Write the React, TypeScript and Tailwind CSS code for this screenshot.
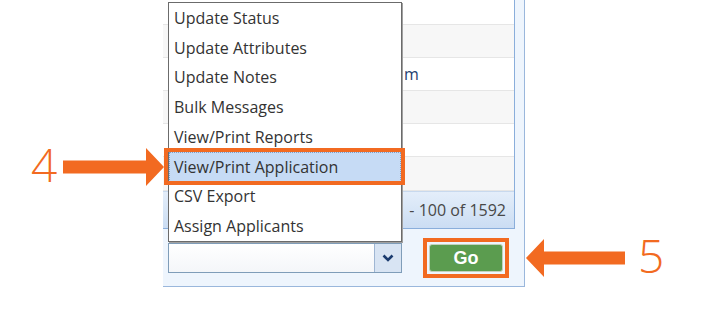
import React from "react";

const actions = [
  "Update Status",
  "Update Attributes",
  "Update Notes",
  "Bulk Messages",
  "View/Print Reports",
  "View/Print Application",
  "CSV Export",
  "Assign Applicants",
];

// only the tail of one cell peeks out from under the open menu
const rows = [
  { h: "h-[25px]", bg: "bg-white", text: "" },
  { h: "h-[33px]", bg: "bg-[#f7f7f7]", text: "" },
  { h: "h-[33px]", bg: "bg-white", text: "m" },
  { h: "h-[33px]", bg: "bg-[#f7f7f7]", text: "" },
  { h: "h-[33px]", bg: "bg-white", text: "" },
  { h: "h-[34px]", bg: "bg-[#f7f7f7]", text: "" },
];

function Chevron() {
  return (
    <svg width="12" height="8" viewBox="0 0 12 8">
      <path d="M1.5 1.5 L6 6 L10.5 1.5" fill="none" stroke="#1b3c6f" strokeWidth="2.6" />
    </svg>
  );
}

export default function App() {
  return (
    <div className="relative w-[720px] h-[318px] bg-white overflow-hidden font-['Open_Sans',sans-serif]">
      {/* grid panel */}
      <div className="ml-[163px] w-[362px] h-[287px] flex flex-col bg-[#eef5fd] border-r border-b border-[#9ab7dc]">
        <div className="w-[352px] h-[229px] shrink-0 flex flex-col bg-white border-r border-b border-[#8aaedb]">
          {rows.map((r, i) => (
            <div
              key={i}
              className={`${r.h} ${r.bg} shrink-0 flex items-center pl-[241px] border-b border-[#e6e6e6] text-[16px] text-[#24406e]`}
            >
              {r.text}
            </div>
          ))}
          <div className="flex-1 flex items-center justify-end pr-[8px] bg-gradient-to-b from-[#e4eefa] to-[#cbddf3] border-t border-[#c8d9ee] text-[16px] font-medium text-[#484848]">
            - 100 of 1592
          </div>
        </div>

        <div className="flex items-center pl-[5px] mt-[9px]">
          <div className="w-[234px] h-[30px] flex border border-[#7f9db9] bg-white">
            <div className="flex-1 bg-gradient-to-b from-white to-[#f4f6f9]" />
            <div className="w-[27px] flex items-center justify-center bg-[#d8e4f3] border-l border-[#9fb6d3]">
              <Chevron />
            </div>
          </div>
          <div className="ml-[21px] w-[86px] h-[40px] p-[2px] border-4 border-[#f26a21] bg-[#eef5fd]">
            <button className="w-full h-full flex items-center justify-center rounded-[3px] border border-[#c3d2bd] bg-[#5b9c4f] text-white text-[18px] font-bold font-['Liberation_Sans',sans-serif]">
              Go
            </button>
          </div>
        </div>
      </div>

      {/* open action menu */}
      <div className="absolute left-[168px] top-[2px] w-[234px] bg-white border border-[#6b6b6b] shadow-[1px_1px_0_#a0a0a0]">
        {actions.map((a, i) => (
          <div
            key={a}
            className={`h-[29.75px] flex items-center pl-[5px] text-[16px] text-[#333] ${
              i === 5 ? "bg-[#c6dbf5] outline outline-1 outline-dotted outline-[#7f9cc4] -outline-offset-1" : ""
            }`}
          >
            {a}
          </div>
        ))}
      </div>

      {/* annotation frame */}
      <div className="absolute left-[164px] top-[148px] w-[241px] h-[37px] border-4 border-[#f26a21]" />

      {/* step 4 */}
      <div className="absolute left-[31px] top-[141px] text-[46px] leading-none font-light text-[#f26a21]">4</div>
      <svg className="absolute left-[60px] top-[145px]" width="110" height="45" viewBox="0 0 110 45">
        <path d="M3 15.5 H86 V3 L104 22 L86 41 V28.5 H3 Z" fill="#f26a21" />
      </svg>

      {/* step 5 */}
      <svg className="absolute left-[520px] top-[235px]" width="110" height="46" viewBox="0 0 110 46">
        <path d="M6 23 L24 4 V16.5 H105 V29.5 H24 V42 Z" fill="#f26a21" />
      </svg>
      <div className="absolute left-[638px] top-[232px] text-[46px] leading-none font-light text-[#f26a21]">5</div>
    </div>
  );
}
